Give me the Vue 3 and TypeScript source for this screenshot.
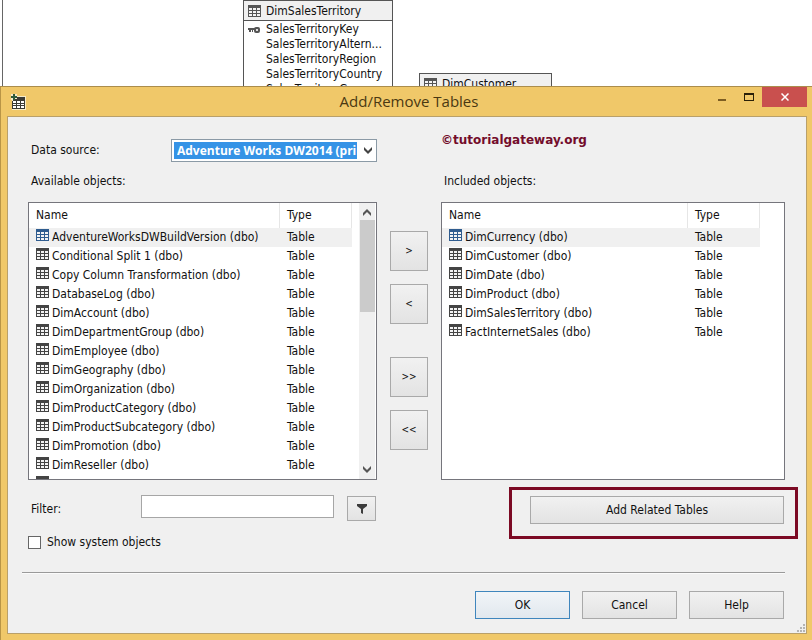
<script setup lang="ts">
import { ref } from 'vue'

interface DbObject {
  name: string
  type: string
}

const asTable = (name: string): DbObject => ({ name, type: name ? 'Table' : '' })

const available: DbObject[] = [
  'AdventureWorksDWBuildVersion (dbo)',
  'Conditional Split 1 (dbo)',
  'Copy Column Transformation (dbo)',
  'DatabaseLog (dbo)',
  'DimAccount (dbo)',
  'DimDepartmentGroup (dbo)',
  'DimEmployee (dbo)',
  'DimGeography (dbo)',
  'DimOrganization (dbo)',
  'DimProductCategory (dbo)',
  'DimProductSubcategory (dbo)',
  'DimPromotion (dbo)',
  'DimReseller (dbo)',
  '',
].map(asTable)

const included: DbObject[] = [
  'DimCurrency (dbo)',
  'DimCustomer (dbo)',
  'DimDate (dbo)',
  'DimProduct (dbo)',
  'DimSalesTerritory (dbo)',
  'FactInternetSales (dbo)',
].map(asTable)

const territoryFields = [
  'SalesTerritoryKey',
  'SalesTerritoryAltern...',
  'SalesTerritoryRegion',
  'SalesTerritoryCountry',
  'SalesTerritoryGroup',
]

const source = ref('dw')
const filter = ref('')
const showSystem = ref(false)
</script>

<template>
  <div class="screen">
    <svg class="defs" width="0" height="0" aria-hidden="true">
      <symbol id="grid-icon" viewBox="0 0 13 12">
        <rect width="13" height="12" fill="currentColor" />
        <path
          fill="#f4f4f4"
          d="M1 3h3v2H1zM5 3h3v2H5zM9 3h3v2H9zM1 6h3v2H1zM5 6h3v2H5zM9 6h3v2H9zM1 9h3v2H1zM5 9h3v2H5zM9 9h3v2H9z"
        />
      </symbol>
    </svg>

    <div class="diagram">
      <div class="node territory">
        <div class="node-title">
          <svg class="node-icon" width="13" height="12"><use href="#grid-icon" /></svg>
          DimSalesTerritory
        </div>
        <ul class="fields">
          <li v-for="(f, i) in territoryFields" :key="f">
            <svg v-if="i === 0" class="key" width="12" height="6" viewBox="0 0 12 6" aria-hidden="true">
              <path d="M0 1h7v2H5v2H4V3H3v2H1V3H0z" fill="#555" />
              <rect x="7" y="1" width="4" height="4" rx="1" fill="#ddd" stroke="#555" stroke-width="2" />
            </svg>
            {{ f }}
          </li>
        </ul>
      </div>
      <div class="node customer">
        <div class="node-title">
          <svg class="node-icon" width="13" height="12"><use href="#grid-icon" /></svg>
          DimCustomer
        </div>
      </div>
    </div>

    <div class="dialog" role="dialog" aria-labelledby="dialog-title">
      <header class="titlebar">
        <svg class="app-icon" width="15" height="16" viewBox="0 0 15 16" aria-hidden="true">
          <path d="M0 0h6v2h9v14H1V6H0z" fill="#f8ecc8" />
          <path d="M1 7h1V5h4V3h8v12H1z" fill="#3b3b35" />
          <path
            fill="#fff"
            d="M2 7h3v2H2zM6 7h3v2H6zM10 7h3v2h-3zM2 10h3v1H2zM6 10h3v1H6zM10 10h3v1h-3zM2 12h3v2H2zM6 12h3v2H6zM10 12h3v2h-3z"
          />
          <path d="M2 0h2v2h2v2H4v2H2V4H0V2h2z" fill="#2f5c3c" />
        </svg>
        <h1 id="dialog-title">Add/Remove Tables</h1>
        <div class="window-buttons">
          <button type="button" aria-label="Minimize">
            <svg width="8" height="8" viewBox="0 0 8 8"><path d="M0 6h8v2H0z" fill="#7d5d22" /></svg>
          </button>
          <button type="button" aria-label="Maximize">
            <svg width="10" height="8" viewBox="0 0 10 8">
              <path fill-rule="evenodd" d="M0 0h10v8H0zM1 2v5h8V2z" fill="#2a2008" />
            </svg>
          </button>
          <button type="button" class="close" aria-label="Close">
            <svg width="8" height="8" viewBox="0 0 8 8">
              <path d="M0.500 0.500l7 7M7.500 0.500l-7 7" stroke="#fff" stroke-width="1.500" />
            </svg>
          </button>
        </div>
      </header>

      <div class="client">
        <div class="columns">
          <section class="column">
            <div class="field-row">
              <label class="caption source-caption" for="source">Data source:</label>
              <div class="combo">
                <select id="source" v-model="source">
                  <option value="dw">Adventure Works DW2014 (primary)</option>
                </select>
                <svg width="8" height="7" viewBox="0 0 8 7" aria-hidden="true">
                  <path d="M0 0l4 4 4-4v3L4 7 0 3z" fill="#444" />
                </svg>
              </div>
            </div>
            <h2 class="caption">Available objects:</h2>
            <div class="list">
              <table>
                <thead>
                  <tr>
                    <th>Name</th>
                    <th class="type">Type</th>
                  </tr>
                </thead>
                <tbody>
                  <tr v-for="(o, i) in available" :key="o.name" :class="{ selected: i === 0 }">
                    <td>
                      <span class="object">
                        <svg width="13" height="12"><use href="#grid-icon" /></svg>{{ o.name }}
                      </span>
                    </td>
                    <td class="type">{{ o.type }}</td>
                  </tr>
                </tbody>
              </table>
              <div class="scrollbar" aria-hidden="true">
                <svg width="8" height="7" viewBox="0 0 8 7"><path d="M0 7l4-4 4 4V4L4 0 0 4z" fill="#555" /></svg>
                <div class="thumb"></div>
                <svg width="8" height="7" viewBox="0 0 8 7"><path d="M0 0l4 4 4-4v3L4 7 0 3z" fill="#555" /></svg>
              </div>
            </div>
            <div class="field-row filter-row">
              <label class="caption filter-caption" for="filter">Filter:</label>
              <input id="filter" v-model="filter" type="text" class="filter-input" />
              <button type="button" class="btn funnel" aria-label="Apply filter">
                <svg width="10" height="10" viewBox="0 0 10 10">
                  <path d="M0 0h10v2L6 5v5L4 9V5L0 2z" fill="#3c3c3c" />
                </svg>
              </button>
            </div>
            <label class="check">
              <input v-model="showSystem" type="checkbox" />
              Show system objects
            </label>
          </section>

          <div class="movers">
            <button type="button" class="btn">&gt;</button>
            <button type="button" class="btn">&lt;</button>
            <button type="button" class="btn all">&gt;&gt;</button>
            <button type="button" class="btn">&lt;&lt;</button>
          </div>

          <section class="column">
            <p class="credit">©tutorialgateway.org</p>
            <h2 class="caption">Included objects:</h2>
            <div class="list">
              <table>
                <thead>
                  <tr>
                    <th>Name</th>
                    <th class="type">Type</th>
                  </tr>
                </thead>
                <tbody>
                  <tr v-for="(o, i) in included" :key="o.name" :class="{ selected: i === 0 }">
                    <td>
                      <span class="object">
                        <svg width="13" height="12"><use href="#grid-icon" /></svg>{{ o.name }}
                      </span>
                    </td>
                    <td class="type">{{ o.type }}</td>
                  </tr>
                </tbody>
              </table>
            </div>
            <div class="highlight">
              <button type="button" class="btn">Add Related Tables</button>
            </div>
          </section>
        </div>

        <hr class="rule" />

        <footer class="actions">
          <button type="button" class="btn default">OK</button>
          <button type="button" class="btn">Cancel</button>
          <button type="button" class="btn">Help</button>
        </footer>
        <svg class="grip" width="8" height="8" viewBox="0 0 8 8" aria-hidden="true">
          <path d="M6 0h2v2H6zM3 3h2v2H3zM6 3h2v2H6zM0 6h2v2H0zM3 6h2v2H3zM6 6h2v2H6z" fill="#b4b4b4" />
        </svg>
      </div>
    </div>
  </div>
</template>

<style>
body {
  margin: 0;
  background: #fff;
}
</style>

<style scoped>
* {
  box-sizing: border-box;
}
.screen {
  min-height: 100vh;
  display: flex;
  flex-direction: column;
  overflow: hidden;
  font: 12px/18px 'DejaVu Sans Condensed', 'Open Sans', sans-serif;
  color: #111;
}
.defs {
  position: absolute;
}
button,
input,
select {
  font: inherit;
  color: inherit;
}

.diagram {
  position: relative;
  height: 86px;
  overflow: hidden;
  margin-left: 2px;
  border-left: 1px solid #666;
}
.node {
  position: absolute;
  border: 1px solid #555;
  background: #fff;
}
.territory {
  left: 240px;
  top: 0;
  width: 150px;
}
.customer {
  left: 416px;
  top: 73px;
  width: 133px;
}
.node-title {
  display: flex;
  align-items: center;
  gap: 5px;
  height: 20px;
  padding-left: 4px;
  background: #f0f0f0;
  border-bottom: 1px solid #555;
}
.node-icon {
  color: #555;
}
.fields {
  margin: 0;
  padding: 1px 0 0 22px;
  list-style: none;
  line-height: 15px;
}
.fields li {
  position: relative;
  white-space: nowrap;
}
.key {
  position: absolute;
  left: -18px;
  top: 5px;
}

.dialog {
  flex: 1;
  display: flex;
  flex-direction: column;
  padding: 0 5px 6px 7px;
  background: #f0c869;
  border-top: 1px solid #ab8d4c;
  box-shadow: inset 1px 0 #b99546;
}
.titlebar {
  display: grid;
  grid-template-columns: 1fr auto 1fr;
  height: 29px;
  padding-left: 4px;
}
.app-icon {
  margin-top: 7px;
}
.titlebar h1 {
  margin: 0;
  font-family: 'Open Sans', 'Noto Sans', sans-serif;
  font-size: 15px;
  font-weight: 400;
  line-height: 29px;
  color: #4a3812;
}
.window-buttons {
  display: flex;
  justify-content: flex-end;
  align-items: flex-start;
}
.window-buttons button {
  display: flex;
  align-items: center;
  justify-content: center;
  width: 27px;
  height: 20px;
  padding: 0;
  border: 0;
  background: none;
}
.window-buttons .close {
  width: 45px;
  background: #c9504e;
}

.client {
  flex: 1;
  position: relative;
  padding: 21px 21px 14px 20px;
  background: #f0f0f0;
  border: 1px solid #b9a06a;
}
.columns {
  display: grid;
  grid-template-columns: minmax(0, 349fr) 38px minmax(0, 344fr);
  column-gap: 13px;
}
.column {
  display: flex;
  flex-direction: column;
}
.field-row {
  display: flex;
  align-items: center;
  height: 24px;
}
.caption {
  margin: 0;
  padding-left: 3px;
  font-size: 12px;
  font-weight: 400;
  line-height: 18px;
}
h2.caption {
  margin: 10px 0 12px;
}
.source-caption {
  width: 143px;
}
.combo {
  flex: 1;
  min-width: 0;
  display: flex;
  align-items: center;
  height: 23px;
  padding: 0 4px 0 2px;
  gap: 7px;
  background: #fff;
  border: 1px solid #8b9aa6;
}
.combo select {
  flex: 1;
  min-width: 0;
  height: 17px;
  padding: 0 0 0 3px;
  appearance: none;
  border: 0;
  border-radius: 0;
  background: #3593e6;
  color: #fff;
  font-family: 'Open Sans', 'Noto Sans', sans-serif;
  font-weight: 700;
  line-height: 17px;
  text-overflow: clip;
}
.credit {
  height: 24px;
  margin: 0;
  font: 700 12px/4px 'DejaVu Sans', sans-serif;
  color: #730c2b;
}

.list {
  display: flex;
  align-items: flex-start;
  gap: 7px;
  height: 278px;
  padding-right: 1px;
  overflow: hidden;
  background: #fff;
  border: 1px solid #75757c;
}
.list table {
  flex: 1;
  border-collapse: separate;
  border-spacing: 0;
  table-layout: fixed;
}
.list > table:last-child {
  margin-right: 23px;
}
th,
td {
  padding: 0 0 0 7px;
  text-align: left;
  font-weight: 400;
  white-space: nowrap;
  line-height: 19px;
}
th {
  height: 25px;
  border-right: 1px solid #e6e6e6;
}
td {
  height: 19px;
}
.type {
  width: 72px;
}
.selected td {
  background: #f0f0f0;
}
.object {
  display: flex;
  gap: 3px;
  height: 19px;
}
.object svg {
  margin-top: 1px;
  color: #444;
}
.selected .object svg {
  color: #2f5c8f;
}
.scrollbar {
  align-self: stretch;
  display: flex;
  flex-direction: column;
  align-items: center;
  width: 16px;
  padding: 6px 0;
  gap: 4px;
  background: #f0f0f0;
}
.thumb {
  width: 15px;
  height: 92px;
  margin-bottom: auto;
  background: #cbcbcb;
}

.btn {
  padding: 0;
  text-align: center;
  border: 1px solid #a9a9a9;
  border-radius: 0;
  background: linear-gradient(#f1f1f1, #e3e3e3);
}
.movers {
  display: flex;
  flex-direction: column;
  gap: 13px;
  padding-top: 93px;
}
.movers .btn {
  height: 40px;
  font-size: 10px;
}
.movers .all {
  margin-top: 20px;
}

.filter-row {
  height: 26px;
  margin-top: 15px;
  align-items: flex-start;
}
.filter-caption {
  width: 113px;
  line-height: 28px;
}
.filter-input {
  flex: 1;
  min-width: 0;
  height: 23px;
  padding: 0 4px;
  border: 1px solid #a6a6a6;
  background: #fff;
}
.funnel {
  display: flex;
  align-items: center;
  justify-content: center;
  width: 29px;
  height: 25px;
  margin: 1px 1px 0 13px;
}
.check {
  display: flex;
  align-items: center;
  gap: 6px;
  margin-top: 12px;
}
.check input {
  appearance: none;
  width: 13px;
  height: 13px;
  margin: 0;
  background: #fff;
  border: 1px solid #666;
}
.highlight {
  display: flex;
  height: 52px;
  margin: 7px -13px 0 68px;
  padding: 6px 11px 12px 18px;
  border: 3px solid #7c0a24;
}
.highlight .btn {
  flex: 1;
}
.rule {
  height: 1px;
  margin: 21px 0 18px -6px;
  border: 0;
  background: #9a9a9a;
  box-shadow: 0 1px #fbfbfb;
}
.actions {
  display: flex;
  justify-content: flex-end;
  gap: 12px;
  padding-right: 1px;
}
.actions .btn {
  width: 95px;
  height: 28px;
}
.actions .default {
  border-color: #3f86bd;
  background: linear-gradient(#f1f5f8, #e1e8ee);
}
.grip {
  position: absolute;
  right: 1px;
  bottom: 1px;
}
</style>
